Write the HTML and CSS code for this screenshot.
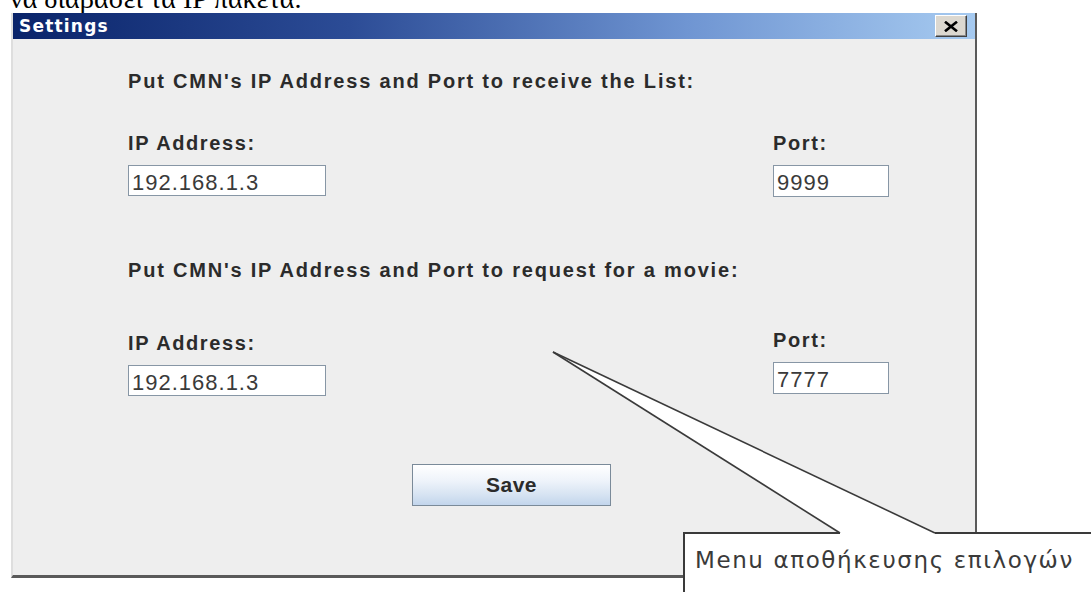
FILE: index.html
```html
<!DOCTYPE html>
<html lang="el">
<head>
<meta charset="utf-8">
<title>Settings</title>
<link rel="stylesheet" href="styles.css">
</head>
<body>
  <div class="doc-line"><p>να διαβάσει τα IP πακέτα.</p></div>

  <div class="window">
    <div class="titlebar">
      <span class="title">Settings</span>
      <button class="close" type="button" aria-label="Close">
        <svg width="14" height="11" viewBox="0 0 14 11"><path d="M2 1.5 L12 9.5 M12 1.5 L2 9.5" stroke="#000" stroke-width="2.6" stroke-linecap="square"/></svg>
      </button>
    </div>

    <div class="content">
      <section class="group">
        <h2 class="heading">Put CMN's IP Address and Port to receive the List:</h2>
        <div class="fields">
          <div class="col">
            <label class="label">IP Address:</label>
            <div class="field field-ip">192.168.1.3</div>
          </div>
          <div class="col">
            <label class="label">Port:</label>
            <div class="field field-port">9999</div>
          </div>
        </div>
      </section>

      <section class="group group-second">
        <h2 class="heading">Put CMN's IP Address and Port to request for a movie:</h2>
        <div class="fields fields-second">
          <div class="col">
            <label class="label">IP Address:</label>
            <div class="field field-ip">192.168.1.3</div>
          </div>
          <div class="col col-raised">
            <label class="label">Port:</label>
            <div class="field field-port">7777</div>
          </div>
        </div>
      </section>

      <div class="actions">
        <button class="save" type="button">Save</button>
      </div>
    </div>
  </div>

  <div class="callout">Menu αποθήκευσης επιλογών</div>
  <svg class="callout-tail" width="1091" height="592" viewBox="0 0 1091 592">
    <polygon points="553,352 840,532 840,536 935,536 935,532" fill="#fff"/>
    <line x1="553" y1="352" x2="840" y2="533" stroke="#3a3a3a" stroke-width="1.6"/>
    <line x1="553" y1="352" x2="935" y2="533" stroke="#3a3a3a" stroke-width="1.6"/>
  </svg>
</body>
</html>
```

FILE: styles.css
```css
html, body {
  margin: 0;
  padding: 0;
}

body {
  position: relative;
  width: 1091px;
  height: 592px;
  overflow: hidden;
  background: #ffffff;
  font-family: "Liberation Sans", Arial, sans-serif;
  color: #2b2b2b;
}

/* line of document text above the dialog */
.doc-line {
  height: 13px;
  overflow: hidden;
}

.doc-line p {
  margin: -17px 0 0 10px;
  font-family: "Liberation Serif", "Times New Roman", serif;
  font-size: 28px;
  line-height: 32px;
  color: #000;
  white-space: nowrap;
}

/* dialog window */
.window {
  margin-left: 11px;
  width: 966px;
  height: 565px;
  box-sizing: border-box;
  border-left: 2px solid #dedede;
  border-right: 2px solid #5a5a5a;
  border-bottom: 3px solid #5a5a5a;
  background: #eeeeee;
  display: flex;
  flex-direction: column;
}

.titlebar {
  height: 26px;
  flex: none;
  display: flex;
  align-items: center;
  justify-content: space-between;
  padding: 0 8px 0 6px;
  background: linear-gradient(to right, #0a246a 0%, #2c4c96 35%, #6f95d2 70%, #a6caf0 100%);
}

.title {
  color: #ffffff;
  font-family: "DejaVu Sans", Verdana, sans-serif;
  font-weight: bold;
  font-size: 17px;
  letter-spacing: 1.2px;
}

.close {
  width: 32px;
  height: 22px;
  padding: 0;
  display: flex;
  align-items: center;
  justify-content: center;
  background: #dcd8d0;
  border: 1px solid;
  border-color: #ffffff #404040 #404040 #ffffff;
  box-shadow: inset -1px -1px 0 #8a8a8a;
}

.content {
  padding: 31px 0 0 115px;
}

.heading {
  margin: 0;
  font-size: 20px;
  line-height: 22px;
  font-weight: bold;
  letter-spacing: 1.8px;
  color: #2b2b2b;
  white-space: nowrap;
}

.group-second {
  margin-top: 62px;
}

.fields {
  display: grid;
  grid-template-columns: 645px auto;
  margin-top: 40px;
}

.fields-second {
  margin-top: 51px;
}

.col {
  display: flex;
  flex-direction: column;
  align-items: flex-start;
}

.col-raised {
  margin-top: -3px;
}

.label {
  display: block;
  font-size: 20px;
  line-height: 22px;
  font-weight: bold;
  letter-spacing: 1.6px;
  color: #2b2b2b;
}

.field {
  margin-top: 11px;
  height: 31px;
  box-sizing: border-box;
  padding: 3px 0 0 3px;
  border: 1px solid #8796a5;
  background: #ffffff;
  font-size: 22px;
  line-height: 28px;
  letter-spacing: 1px;
  color: #3a3a3a;
  overflow: hidden;
}

.field-ip {
  width: 198px;
}

.field-port {
  width: 116px;
  height: 32px;
}

.actions {
  margin-top: 68px;
  padding-left: 284px;
}

.save {
  width: 199px;
  height: 42px;
  padding: 0;
  border: 1px solid #7a8a99;
  background: linear-gradient(to bottom, #ffffff 0%, #eef3fa 40%, #d6e3f2 75%, #c2d5ec 100%);
  font-family: "Liberation Sans", Arial, sans-serif;
  font-size: 21px;
  font-weight: bold;
  letter-spacing: 0.5px;
  color: #2b2b2b;
}

/* annotation box over the dialog */
.callout {
  position: absolute;
  left: 683px;
  top: 532px;
  width: 420px;
  height: 70px;
  box-sizing: border-box;
  padding: 13px 0 0 10px;
  background: #ffffff;
  border-top: 2px solid #3a3a3a;
  border-left: 2px solid #3a3a3a;
  font-family: "DejaVu Sans", Verdana, sans-serif;
  font-size: 23px;
  line-height: 26px;
  letter-spacing: 1.6px;
  color: #3a3a3a;
  white-space: nowrap;
}

.callout-tail {
  position: absolute;
  left: 0;
  top: 0;
  pointer-events: none;
}
```
